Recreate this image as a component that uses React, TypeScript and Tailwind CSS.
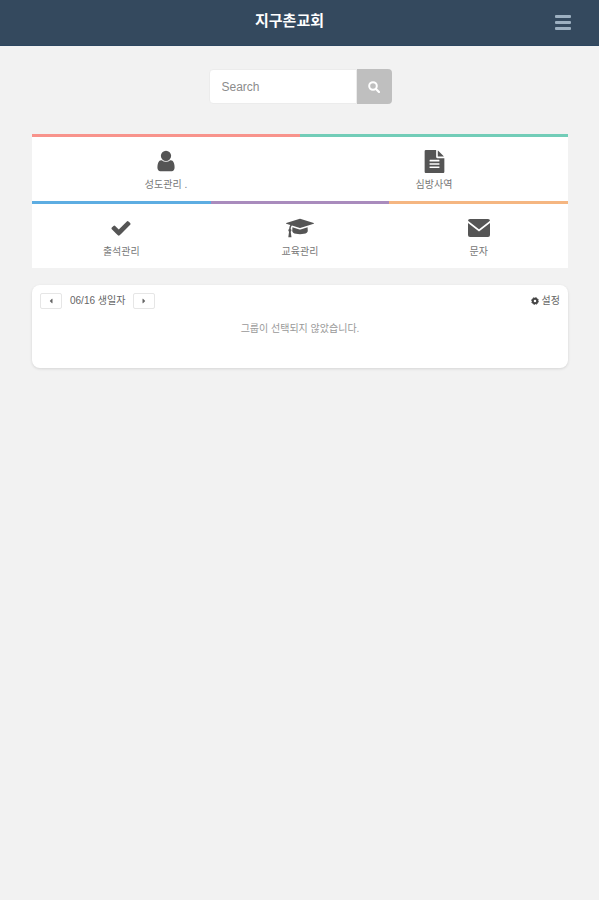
import type { ReactNode } from "react";
import { FaCaretLeft, FaCaretRight } from "react-icons/fa";

interface IconProps {
    className?: string;
}

const BarsIcon = ({ className }: IconProps) => (
    <svg viewBox="0 0 16 15" fill="currentColor" className={className} aria-hidden="true">
        <rect width="16" height="3" rx="1" />
        <rect y="6" width="16" height="3" rx="1" />
        <rect y="12" width="16" height="3" rx="1" />
    </svg>
);

const SearchIcon = ({ className }: IconProps) => (
    <svg viewBox="0 0 12 12" fill="none" stroke="currentColor" className={className} aria-hidden="true">
        <circle cx="5" cy="5" r="3.8" strokeWidth="2" />
        <path d="M8 8 L11 11" strokeWidth="2.2" strokeLinecap="round" />
    </svg>
);

const CogIcon = ({ className }: IconProps) => (
    <svg viewBox="0 0 10 10" fill="none" stroke="currentColor" className={className} aria-hidden="true">
        <circle cx="5" cy="5" r="2.8" strokeWidth="2.4" />
        <circle cx="5" cy="5" r="4.4" strokeWidth="1" strokeDasharray="1.9 1.55" />
    </svg>
);

const UserIcon = ({ className }: IconProps) => (
    <svg viewBox="0 0 1792 1792" fill="currentColor" className={className} aria-hidden="true">
        <path d="M1536 1399q0 109-62.5 187t-150.5 78h-854q-88 0-150.5-78t-62.5-187q0-85 8.5-160.5t31.5-152 58.5-131 94-89 134.5-34.5q131 128 313 128t313-128q76 0 134.5 34.5t94 89 58.5 131 31.5 152 8.5 160.5zm-256-887q0 159-112.5 271.5t-271.5 112.5-271.5-112.5-112.5-271.5 112.5-271.5 271.5-112.5 271.5 112.5 112.5 271.5z" />
    </svg>
);

const FileIcon = ({ className }: IconProps) => (
    <svg viewBox="0 0 1792 1792" fill="currentColor" className={className} aria-hidden="true">
        <path d="M1596 476q14 14 28 36h-472v-472q22 14 36 28zm-476 164h544v1056q0 40-28 68t-68 28h-1344q-40 0-68-28t-28-68v-1600q0-40 28-68t68-28h800v544q0 40 28 68t68 28zm160 736v-64q0-14-9-23t-23-9h-704q-14 0-23 9t-9 23v64q0 14 9 23t23 9h704q14 0 23-9t9-23zm0-256v-64q0-14-9-23t-23-9h-704q-14 0-23 9t-9 23v64q0 14 9 23t23 9h704q14 0 23-9t9-23zm0-256v-64q0-14-9-23t-23-9h-704q-14 0-23 9t-9 23v64q0 14 9 23t23 9h704q14 0 23-9t9-23z" />
    </svg>
);

const CheckIcon = ({ className }: IconProps) => (
    <svg viewBox="0 0 1792 1792" fill="currentColor" className={className} aria-hidden="true">
        <path d="M1671 566q0 40-28 68l-724 724-136 136q-28 28-68 28t-68-28l-136-136-362-362q-28-28-28-68t28-68l136-136q28-28 68-28t68 28l294 295 656-657q28-28 68-28t68 28l136 136q28 28 28 68z" />
    </svg>
);

const CapIcon = ({ className }: IconProps) => (
    <svg viewBox="0 0 2304 1792" fill="currentColor" className={className} aria-hidden="true">
        <path d="M1774 836l18 316q4 69-82 128t-235 93.5-323 34.5-323-34.5-235-93.5-82-128l18-316 574 181q22 7 48 7t48-7zm530-324q0 23-22 31l-1120 352q-4 1-10 1t-10-1l-652-206q-43 34-71 111.5t-34 178.5q63 36 63 109 0 69-58 107l58 433q2 14-8 25-9 11-24 11h-192q-15 0-24-11-10-11-8-25l58-433q-58-38-58-107 0-73 65-111 11-207 98-330l-333-104q-22-8-22-31t22-31l1120-352q4-1 10-1t10 1l1120 352q22 8 22 31z" />
    </svg>
);

const MailIcon = ({ className }: IconProps) => (
    <svg viewBox="0 0 22 22" className={className} aria-hidden="true">
        <rect y="2" width="22" height="18" rx="2" fill="currentColor" />
        <path d="M-0.5 4.5 L11 13.5 L22.5 4.5" fill="none" stroke="#fff" strokeWidth="1.7" />
    </svg>
);

interface TileProps {
    label: string;
    icon: ReactNode;
    className: string;
}

const Tile = ({ label, icon, className }: TileProps) => (
    <a
        href="#"
        className={`flex flex-1 flex-col items-center gap-1 border-t-3 bg-white pt-3 pb-2 text-[10px] leading-4 text-[#777] ${className}`}
    >
        <span className="flex h-6 items-center text-[#555]">{icon}</span>
        <span>{label}</span>
    </a>
);

export default function App() {
    return (
        <div className="min-h-screen bg-[#f2f2f2] font-['Liberation_Sans','Noto_Sans_CJK_KR',sans-serif]">
            <header className="flex h-[46px] items-center border-b border-[#2c4660] bg-[#34495e] pr-7 pl-6">
                <h1 className="flex-1 pb-1 text-center text-[15px] leading-6 font-bold text-white">지구촌교회</h1>
                <button type="button" aria-label="메뉴" className="text-[#9db0c1]">
                    <BarsIcon className="h-[15px] w-4" />
                </button>
            </header>

            <main className="pt-[23px] pr-[31px] pl-8">
                <form className="mx-auto flex h-[35px] w-[183px]" onSubmit={(e) => e.preventDefault()}>
                    <input
                        type="text"
                        aria-label="Search"
                        placeholder="Search"
                        className="min-w-0 flex-1 rounded-l border border-[#ececec] bg-white px-3 text-xs text-[#555] outline-none placeholder:text-[#8c8c8c]"
                    />
                    <button
                        type="submit"
                        aria-label="검색"
                        className="flex w-[35px] items-center justify-center rounded-r bg-[#bfbfbf] text-white"
                    >
                        <SearchIcon className="size-3" />
                    </button>
                </form>

                <nav className="mt-[30px]">
                    <div className="flex">
                        <Tile label="성도관리 ." icon={<UserIcon className="size-6" />} className="border-[#f8938c]" />
                        <Tile label="심방사역" icon={<FileIcon className="size-[23px]" />} className="border-[#72cdb8]" />
                    </div>
                    <div className="flex">
                        <Tile label="출석관리" icon={<CheckIcon className="size-[22px]" />} className="border-[#5dade2]" />
                        <Tile label="교육관리" icon={<CapIcon className="h-[22px] w-7" />} className="border-[#a98bbd]" />
                        <Tile label="문자" icon={<MailIcon className="size-[22px]" />} className="border-[#f5b681]" />
                    </div>
                </nav>

                <section className="mt-[17px] min-h-[83px] rounded-lg bg-white px-2 pt-2 shadow-[0_1px_3px_rgba(0,0,0,0.12)]">
                    <div className="flex items-center text-[10px] leading-4 text-[#666]">
                        <button
                            type="button"
                            aria-label="이전"
                            className="flex h-4 w-[22px] items-center justify-center rounded-xs border border-[#e6e6e6]"
                        >
                            <FaCaretLeft className="size-2" />
                        </button>
                        <span className="mx-2">06/16 생일자</span>
                        <button
                            type="button"
                            aria-label="다음"
                            className="flex h-4 w-[22px] items-center justify-center rounded-xs border border-[#e6e6e6]"
                        >
                            <FaCaretRight className="size-2" />
                        </button>
                        <button type="button" className="ml-auto flex items-center gap-[3px]">
                            <CogIcon className="size-2 text-[#444]" />
                            설정
                        </button>
                    </div>
                    <p className="mt-3 text-center text-[10px] leading-4 text-[#999]">그룹이 선택되지 않았습니다.</p>
                </section>
            </main>
        </div>
    );
}
